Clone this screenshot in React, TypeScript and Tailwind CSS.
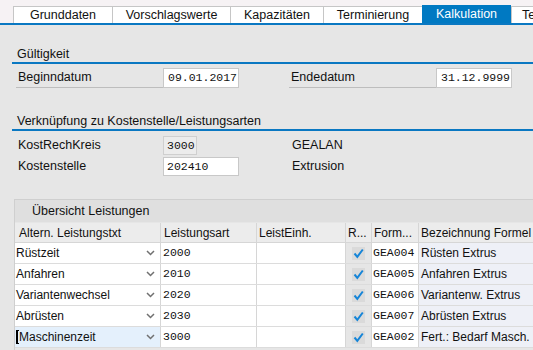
import React from "react";

const tabs = ["Grunddaten", "Vorschlagswerte", "Kapazitäten", "Terminierung", "Kalkulation", "Te"];
const tabWidths = [99, 118, 93, 99, 89, 40];

const rows = [
  { txt: "Rüstzeit", art: "2000", form: "GEA004", bez: "Rüsten Extrus" },
  { txt: "Anfahren", art: "2010", form: "GEA005", bez: "Anfahren Extrus" },
  { txt: "Variantenwechsel", art: "2020", form: "GEA006", bez: "Variantenw. Extrus" },
  { txt: "Abrüsten", art: "2030", form: "GEA007", bez: "Abrüsten Extrus" },
  { txt: "Maschinenzeit", art: "3000", form: "GEA002", bez: "Fert.: Bedarf Masch." },
];

function Chevron() {
  return (
    <svg width="9" height="6" viewBox="0 0 9 6" className="shrink-0">
      <path d="M1 1 L4.5 4.5 L8 1" stroke="#707070" strokeWidth="1.5" fill="none" />
    </svg>
  );
}

function Check() {
  return (
    <div className="w-[13px] h-[13px] bg-[#dadada] flex items-center justify-center">
      <svg width="11" height="11" viewBox="0 0 11 11">
        <path d="M1.5 5.5 L4.3 8.8 L9.8 1.5" stroke="#1585d8" strokeWidth="2" fill="none" />
      </svg>
    </div>
  );
}

export default function App() {
  const mono = "font-['Liberation_Mono',monospace] text-[11.5px]";
  return (
    <div className="w-[533px] h-[350px] overflow-hidden bg-[#e6e6e6] text-[#111] text-[12.5px] font-['Liberation_Sans',Arial,sans-serif] flex flex-col">
      {/* tab strip */}
      <div className="h-[23px] bg-[#f6f2f4] flex items-end pl-[13px] shrink-0 overflow-hidden">
        {tabs.map((t, i) =>
          t === "Kalkulation" ? (
            <div
              key={t}
              style={{ width: tabWidths[i] }}
              className="h-[18px] bg-[#0079c2] text-white flex items-center justify-center shrink-0"
            >
              {t}
            </div>
          ) : (
            <div
              key={t}
              style={{ width: tabWidths[i] }}
              className={`h-[17px] bg-white border-t border-l border-[#c6c6c6] ${i === 5 ? "justify-start pl-[10px]" : "justify-center"} flex items-center shrink-0 whitespace-nowrap`}
            >
              {t}
            </div>
          )
        )}
      </div>
      <div className="h-[2px] bg-[#0a78c2] shrink-0" />

      {/* Gültigkeit */}
      <div className="mt-[22px] pl-[12px] shrink-0">
        <div className="h-[15px] pl-[5px] leading-[15px]">Gültigkeit</div>
        <div className="h-[2px] bg-[#0a78c2]" />
      </div>
      <div className="flex items-end pl-[16px] mt-[4px] shrink-0">
        <div className="w-[147px] h-[20px] border-b border-[#bdbdbd] pl-[2px] flex items-center">Beginndatum</div>
        <div className={`w-[76px] h-[20px] border border-[#c8c8c8] bg-white flex items-center pl-[4px] ${mono}`}>09.01.2017</div>
        <div className="w-[50px]" />
        <div className="w-[147px] h-[20px] border-b border-[#bdbdbd] pl-[2px] flex items-center">Endedatum</div>
        <div className={`w-[76px] h-[20px] border border-[#c8c8c8] bg-white flex items-center pl-[4px] ${mono}`}>31.12.9999</div>
      </div>

      {/* Verknüpfung */}
      <div className="mt-[26px] pl-[12px] shrink-0">
        <div className="h-[15px] pl-[5px] leading-[15px]">Verknüpfung zu Kostenstelle/Leistungsarten</div>
        <div className="h-[2px] bg-[#0a78c2]" />
      </div>
      <div className="flex items-center pl-[16px] mt-[5px] h-[19px] shrink-0">
        <div className="w-[147px] pl-[2px]">KostRechKreis</div>
        <div className={`w-[34px] h-[19px] border border-[#cfcfcf] bg-[#ececec] flex items-center pl-[3px] ${mono}`}>3000</div>
        <div className="w-[95px]" />
        <div>GEALAN</div>
      </div>
      <div className="flex items-center pl-[16px] mt-[2px] h-[19px] shrink-0">
        <div className="w-[147px] pl-[2px]">Kostenstelle</div>
        <div className={`w-[76px] h-[19px] border border-[#c8c8c8] bg-white flex items-center pl-[3px] ${mono}`}>202410</div>
        <div className="w-[53px]" />
        <div>Extrusion</div>
      </div>

      {/* table */}
      <div className="mt-[23px] ml-[14px] border-t border-l border-[#cfcfcf] flex-1 flex flex-col text-[12px]">
        <div className="h-[22px] bg-[#dfdfdf] pl-[17px] flex items-center shrink-0 text-[12.5px]">Übersicht Leistungen</div>
        <div className="h-[20px] mt-[1px] flex bg-[#ececec] border-b border-[#d6d6d6] shrink-0">
          <div className="w-[146px] pl-[4px] flex items-center border-r border-[#d6d6d6]">Altern. Leistungstxt</div>
          <div className="w-[96px] pl-[3px] flex items-center border-r border-[#d6d6d6]">Leistungsart</div>
          <div className="w-[89px] pl-[2px] flex items-center border-r border-[#d6d6d6]">LeistEinh.</div>
          <div className="w-[26px] pl-[2px] flex items-center border-r border-[#d6d6d6]">R...</div>
          <div className="w-[47px] pl-[2px] flex items-center border-r border-[#d6d6d6] whitespace-nowrap">Form...</div>
          <div className="flex-1 pl-[2px] flex items-center whitespace-nowrap">Bezeichnung Formel</div>
        </div>
        {rows.map((r, i) => {
          const last = i === rows.length - 1;
          return (
            <div key={r.art} className="h-[21px] flex border-b border-[#dcdcdc] shrink-0">
              <div className={`w-[146px] pl-[1px] pr-[5px] flex items-center border-r border-[#d6d6d6] ${last ? "bg-[#e4f0fc]" : "bg-white"}`}>
                {last && <span className="w-[3px] h-[14px] border-l-2 border-t border-b border-black shrink-0" />}
                <span className="flex-1">{r.txt}</span>
                <Chevron />
              </div>
              <div className={`w-[96px] pl-[2px] flex items-center border-r border-[#d6d6d6] bg-white ${mono}`}>{r.art}</div>
              <div className="w-[89px] flex items-center border-r border-[#d6d6d6] bg-white" />
              <div className="w-[26px] flex items-center justify-center border-r border-[#d6d6d6] bg-[#e6e6e6]">
                <Check />
              </div>
              <div className={`w-[47px] pl-[1px] flex items-center border-r border-[#d6d6d6] bg-white ${mono}`}>{r.form}</div>
              <div className="flex-1 pl-[2px] flex items-center bg-[#eef0f7] whitespace-nowrap">{r.bez}</div>
            </div>
          );
        })}
      </div>
    </div>
  );
}
